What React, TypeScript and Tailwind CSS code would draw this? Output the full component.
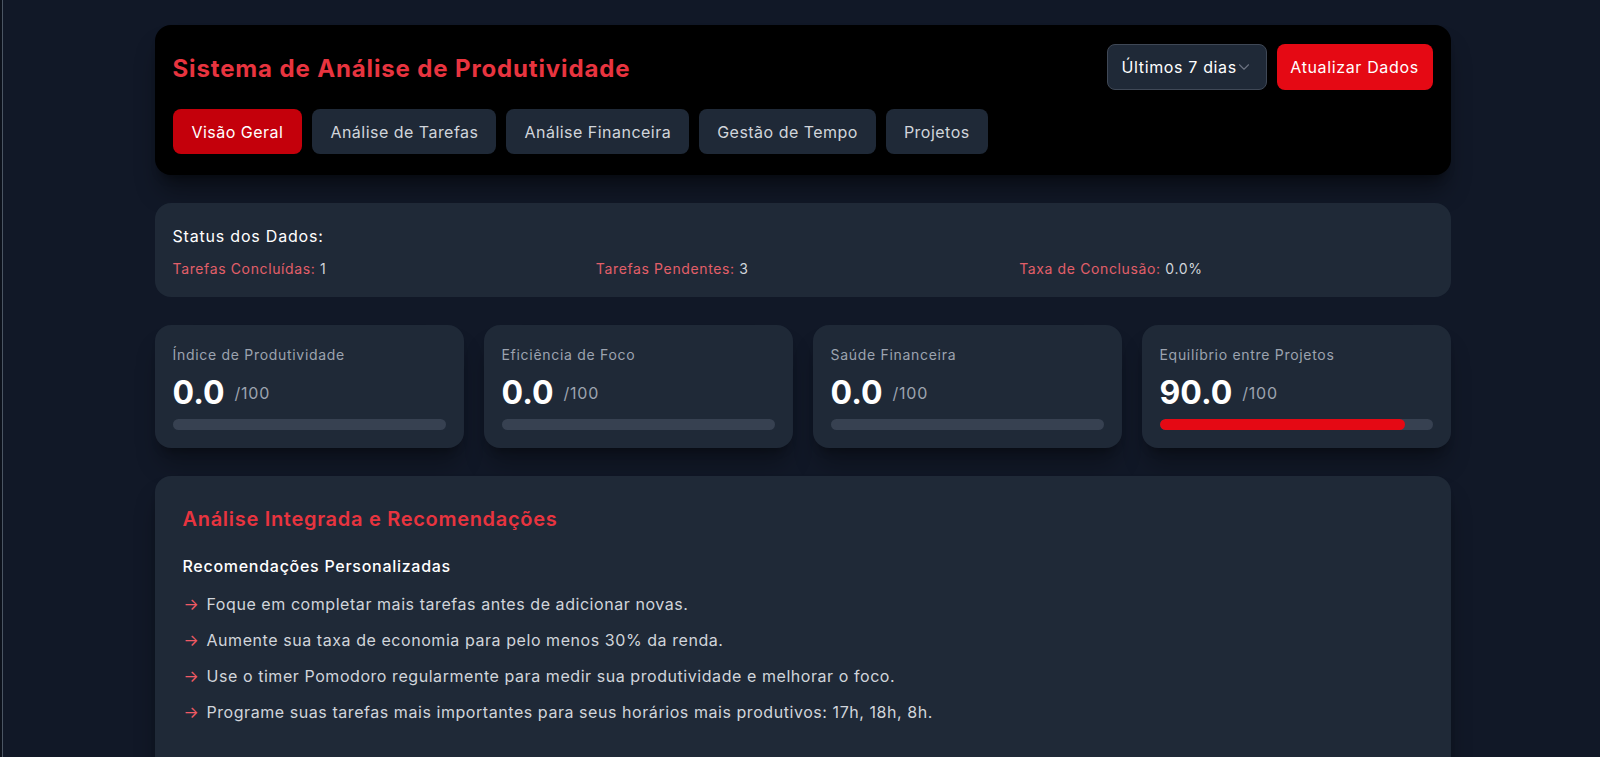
import { ChevronDown } from "lucide-react";

type Metric = {
  label: string;
  value: number;
};

const metrics: Metric[] = [
  { label: "Índice de Produtividade", value: 0 },
  { label: "Eficiência de Foco", value: 0 },
  { label: "Saúde Financeira", value: 0 },
  { label: "Equilíbrio entre Projetos", value: 90 },
];

const tabs = [
  "Visão Geral",
  "Análise de Tarefas",
  "Análise Financeira",
  "Gestão de Tempo",
  "Projetos",
];

const recomendacoes = [
  "Foque em completar mais tarefas antes de adicionar novas.",
  "Aumente sua taxa de economia para pelo menos 30% da renda.",
  "Use o timer Pomodoro regularmente para medir sua produtividade e melhorar o foco.",
  "Programe suas tarefas mais importantes para seus horários mais produtivos: 17h, 18h, 8h.",
];

function MetricCard({ label, value }: Metric) {
  return (
    <div className="rounded-2xl bg-[#1f2937] px-[18px] pt-[20px] pb-[18px] shadow-xl shadow-black/30">
      <p className="text-sm leading-5 tracking-[0.05em] text-[#9ca3af]">{label}</p>

      <div className="mt-[10px] flex items-center gap-[10px]">
        <span className="text-[32px] leading-[36px] font-bold text-white">
          {value.toFixed(1)}
        </span>
        <span className="text-base tracking-[0.05em] text-[#9ca3af]">/100</span>
      </div>

      <div className="mt-2 h-[11px] w-full overflow-hidden rounded-full bg-[#374151]">
        <div
          className="h-full rounded-full bg-[#e50914]"
          style={{ width: `${value}%` }}
        />
      </div>
    </div>
  );
}

export default function App() {
  return (
    <div className="min-h-screen bg-[#0c111b] pl-[2px] font-['Inter','Noto_Sans',sans-serif]">
      <div className="min-h-screen border-l border-[#4b5563] bg-[#111827] pl-[2px] pt-[25px] pb-10">
        <div className="mx-auto flex w-[1296px] flex-col gap-7">

          {/* Header */}
          <header className="rounded-2xl bg-black px-[18px] pt-[19px] pb-[21px] shadow-xl shadow-black/40">
            <div className="flex items-center justify-between">
              <h1 className="pt-[3px] text-2xl font-bold tracking-[0.036em] text-[#e8343f]">
                Sistema de Análise de Produtividade
              </h1>

              <div className="flex gap-[10px]">
                <button className="flex h-[46px] w-[160px] items-center rounded-lg border border-[#3f4856] bg-[#1f2937] pl-[14px] text-base tracking-[0.04em] text-white">
                  Últimos 7 dias
                  <ChevronDown size={18} strokeWidth={1.5} className="-ml-[2px] text-[#6b7280]" />
                </button>

                <button className="h-[46px] w-[156px] rounded-lg bg-[#e50914] text-base tracking-[0.04em] text-white">
                  Atualizar Dados
                </button>
              </div>
            </div>

            <nav className="mt-[19px] flex gap-[10px]">
              {tabs.map((tab, i) => (
                <button
                  key={tab}
                  className={
                    i === 0
                      ? "h-[45px] rounded-lg bg-[#c4000b] px-[19px] text-base tracking-[0.03em] text-white"
                      : "h-[45px] rounded-lg bg-[#1f2937] px-[18px] text-base tracking-[0.03em] text-[#d1d5db]"
                  }
                >
                  {tab}
                </button>
              ))}
            </nav>
          </header>

          {/* Status */}
          <section className="rounded-2xl bg-[#1f2937] px-[18px] pt-[21px] pb-[18px]">
            <h2 className="text-base leading-6 tracking-[0.05em] text-white">
              Status dos Dados:
            </h2>

            <div className="mt-[11px] grid grid-cols-3 gap-[10px] text-sm leading-5 tracking-[0.045em]">
              <p>
                <span className="text-[#e25f69]">Tarefas Concluídas: </span>
                <span className="text-[#d1d5db]">1</span>
              </p>
              <p>
                <span className="text-[#e25f69]">Tarefas Pendentes: </span>
                <span className="text-[#d1d5db]">3</span>
              </p>
              <p>
                <span className="text-[#e25f69]">Taxa de Conclusão: </span>
                <span className="text-[#d1d5db]">0.0%</span>
              </p>
            </div>
          </section>

          {/* Metrics */}
          <section className="grid grid-cols-4 gap-5">
            {metrics.map((m) => (
              <MetricCard key={m.label} label={m.label} value={m.value} />
            ))}
          </section>

          {/* Recomendações */}
          <section className="rounded-2xl bg-[#1f2937] px-7 pt-[29px] pb-7 shadow-xl shadow-black/40">
            <h2 className="text-xl leading-7 font-semibold tracking-[0.035em] text-[#e8343f]">
              Análise Integrada e Recomendações
            </h2>

            <h3 className="mt-[21px] text-base leading-6 font-medium tracking-[0.045em] text-white">
              Recomendações Personalizadas
            </h3>

            <ul className="mt-[14px] flex flex-col gap-3">
              {recomendacoes.map((r) => (
                <li key={r} className="flex text-base leading-6 tracking-[0.035em] text-[#d1d5db]">
                  <span className="w-6 shrink-0 pl-[1px] text-[#f05a64]">→</span>
                  {r}
                </li>
              ))}
            </ul>

            <h3 className="mt-[28px] pl-6 text-base leading-6 tracking-[0.035em] text-white">
              Análise Histórica
            </h3>

            <p className="mt-3 pl-6 text-base leading-6 tracking-[0.035em] text-[#d1d5db]">
              Seus dados ainda estão sendo coletados.
            </p>
          </section>

        </div>
      </div>
    </div>
  );
}
